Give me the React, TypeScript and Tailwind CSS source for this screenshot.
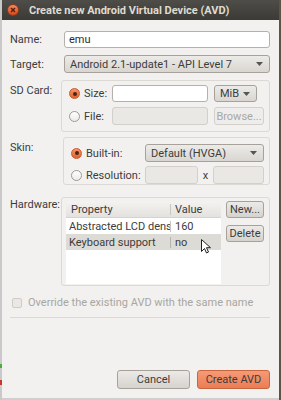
const font = { fontFamily: 'Roboto, "Open Sans", sans-serif' };

function Radio({ checked }: { checked?: boolean }) {
  return checked ? (
    <span className="flex h-[11px] w-[11px] items-center justify-center rounded-full border border-[#c75a2c] bg-gradient-to-b from-[#f6956a] to-[#e0612c]">
      <span className="h-[4px] w-[4px] rounded-full bg-[#4a2516]" />
    </span>
  ) : (
    <span className="h-[11px] w-[11px] rounded-full border border-[#9d9a94] bg-gradient-to-b from-white to-[#ecebe8]" />
  );
}

function Combo({ text, className }: { text: string; className: string }) {
  return (
    <div
      className={`flex items-center justify-between rounded-[3px] border border-[#a6a29b] bg-gradient-to-b from-[#ecebe8] to-[#d9d6d1] pl-[5px] pr-[6px] text-[#3c3c3c] ${className}`}
    >
      <span className="truncate">{text}</span>
      <svg width="7" height="4" viewBox="0 0 7 4">
        <path d="M0 0h7L3.5 4z" fill="#555" />
      </svg>
    </div>
  );
}

function Field({ className, disabled }: { className: string; disabled?: boolean }) {
  return (
    <div
      className={`rounded-[3px] border ${disabled ? 'border-[#d3d0ca] bg-[#e9e8e5]' : 'border-[#b5b1aa] bg-white'} ${className}`}
    />
  );
}

function Button({ text, className, disabled }: { text: string; className: string; disabled?: boolean }) {
  return (
    <div
      className={`flex items-center justify-center rounded-[3px] border ${disabled ? 'border-[#d3d0ca] bg-[#eeedeb] text-[#a9a7a2]' : 'border-[#a6a29b] bg-gradient-to-b from-[#eceae7] to-[#d6d3ce] text-[#3c3c3c]'} ${className}`}
    >
      {text}
    </div>
  );
}

export default function App() {
  return (
    <div className="relative flex h-[400px] w-[281px] overflow-hidden bg-[#cfcfcf] text-[11px] leading-none" style={font}>
      <div className="relative w-[2px] bg-[#c9c9c9]">
        <div className="absolute left-0 top-[364px] h-[4px] w-[2px] bg-[#4cae3a]" />
        <div className="absolute left-0 top-[380px] h-[5px] w-[2px] bg-[#c33a2a]" />
      </div>
      <div className="flex h-[398px] w-[277px] flex-col bg-[#f2f1f0] text-[#3c3c3c]">
        <div className="flex h-[20px] items-center bg-gradient-to-b from-[#4e4d48] to-[#3b3a36] pl-[5px]">
          <span className="flex h-[12px] w-[12px] items-center justify-center rounded-full border border-[#8f3a1c] bg-gradient-to-b from-[#f58a5c] to-[#d7481c]">
            <svg width="6" height="6" viewBox="0 0 6 6">
              <path d="M1 1l4 4M5 1L1 5" stroke="#4a2010" strokeWidth="1.4" />
            </svg>
          </span>
          <span className="ml-[10px] text-[11px] font-bold text-[#dfdbd2]">Create new Android Virtual Device (AVD)</span>
        </div>

        <div className="flex flex-col pl-[8px] pr-[9px]">
          <div className="mt-[11px] flex items-center">
            <span className="w-[54px]">Name:</span>
            <div className="flex h-[17px] flex-1 items-center rounded-[3px] border border-[#b5b1aa] bg-white pl-[4px] text-[#2b2b2b]">
              emu
            </div>
          </div>

          <div className="mt-[7px] flex items-center">
            <span className="w-[54px]">Target:</span>
            <Combo text="Android 2.1-update1 - API Level 7" className="h-[18px] flex-1" />
          </div>

          <div className="mt-[7px] flex">
            <span className="mt-[5px] w-[53px]">SD Card:</span>
            <div className="flex h-[52px] flex-1 flex-col gap-[5px] rounded-[3px] border border-[#dcd9d4] pl-[7px] pr-[5px] pt-[4px]">
              <div className="flex h-[17px] items-center">
                <Radio checked />
                <span className="ml-[4px] w-[28px]">Size:</span>
                <Field className="h-[17px] w-[96px]" />
                <Combo text="MiB" className="ml-[6px] h-[17px] w-[43px]" />
              </div>
              <div className="flex h-[18px] items-center">
                <Radio />
                <span className="ml-[4px] w-[28px]">File:</span>
                <Field disabled className="h-[18px] w-[96px]" />
                <Button disabled text="Browse..." className="ml-[6px] h-[18px] w-[50px]" />
              </div>
            </div>
          </div>

          <div className="mt-[5px] flex">
            <span className="mt-[5px] w-[53px]">Skin:</span>
            <div className="flex h-[48px] flex-1 flex-col gap-[4px] rounded-[3px] border border-[#dcd9d4] pl-[7px] pr-[5px] pt-[6px]">
              <div className="flex h-[18px] items-center">
                <Radio checked />
                <span className="ml-[4px] w-[59px]">Built-in:</span>
                <Combo text="Default (HVGA)" className="h-[18px] flex-1" />
              </div>
              <div className="flex h-[18px] items-center">
                <Radio />
                <span className="ml-[4px] w-[59px]">Resolution:</span>
                <Field disabled className="h-[18px] w-[53px]" />
                <span className="w-[15px] text-center">x</span>
                <Field disabled className="h-[18px] flex-1" />
              </div>
            </div>
          </div>

          <div className="mt-[12px] flex">
            <span className="mt-[2px] w-[53px]">Hardware:</span>
            <div className="flex h-[89px] flex-1 gap-[5px] rounded-[3px] border border-[#dcd9d4] pl-[4px] pr-[5px] pt-[3px]">
              <div className="flex h-[83px] w-[155px] flex-col bg-white">
                <div className="flex h-[17px] items-center border-b border-[#d6d3ce] bg-gradient-to-b from-[#f4f3f1] to-[#e4e2de]">
                  <span className="w-[105px] border-r border-[#c9c6c0] pl-[5px]">Property</span>
                  <span className="pl-[4px]">Value</span>
                </div>
                <div className="flex h-[16px] items-center">
                  <span className="w-[105px] overflow-hidden whitespace-nowrap border-r border-[#c9c6c0] pl-[3px]">Abstracted LCD density</span>
                  <span className="pl-[4px]">160</span>
                </div>
                <div className="flex h-[16px] items-center bg-[#dddbd6]">
                  <span className="w-[105px] border-r border-[#b7b4ae] pl-[3px]">Keyboard support</span>
                  <span className="pl-[4px]">no</span>
                </div>
              </div>
              <div className="flex flex-col gap-[7px]">
                <Button text="New..." className="h-[17px] w-[38px]" />
                <Button text="Delete" className="h-[17px] w-[38px]" />
              </div>
            </div>
          </div>

          <div className="mt-[11px] flex items-center whitespace-nowrap pl-[2px] text-[#a8a6a1]">
            <span className="h-[10px] w-[10px] rounded-[2px] border border-[#cfccc6] bg-[#e9e8e5]" />
            <span className="ml-[6px]">Override the existing AVD with the same name</span>
          </div>

          <div className="mt-[9px] h-px bg-[#dcd9d4]" />

          <div className="mt-[52px] flex justify-end gap-[7px]">
            <Button text="Cancel" className="h-[19px] w-[73px]" />
            <div className="flex h-[19px] w-[73px] items-center justify-center rounded-[3px] border border-[#c8663f] bg-gradient-to-b from-[#f59a76] to-[#ec7d55] text-[#3c3c3c]">
              Create AVD
            </div>
          </div>
        </div>
      </div>
      <div className="w-[2px] bg-[#5d5444]" />

      <svg className="absolute left-[201px] top-[239px]" width="10" height="15" viewBox="0 0 10 15">
        <path d="M0.5 0.5v12l3-3 2 4.5 2-1-2-4.3h4z" fill="#fff" stroke="#222" strokeWidth="1" strokeLinejoin="round" />
      </svg>
    </div>
  );
}
